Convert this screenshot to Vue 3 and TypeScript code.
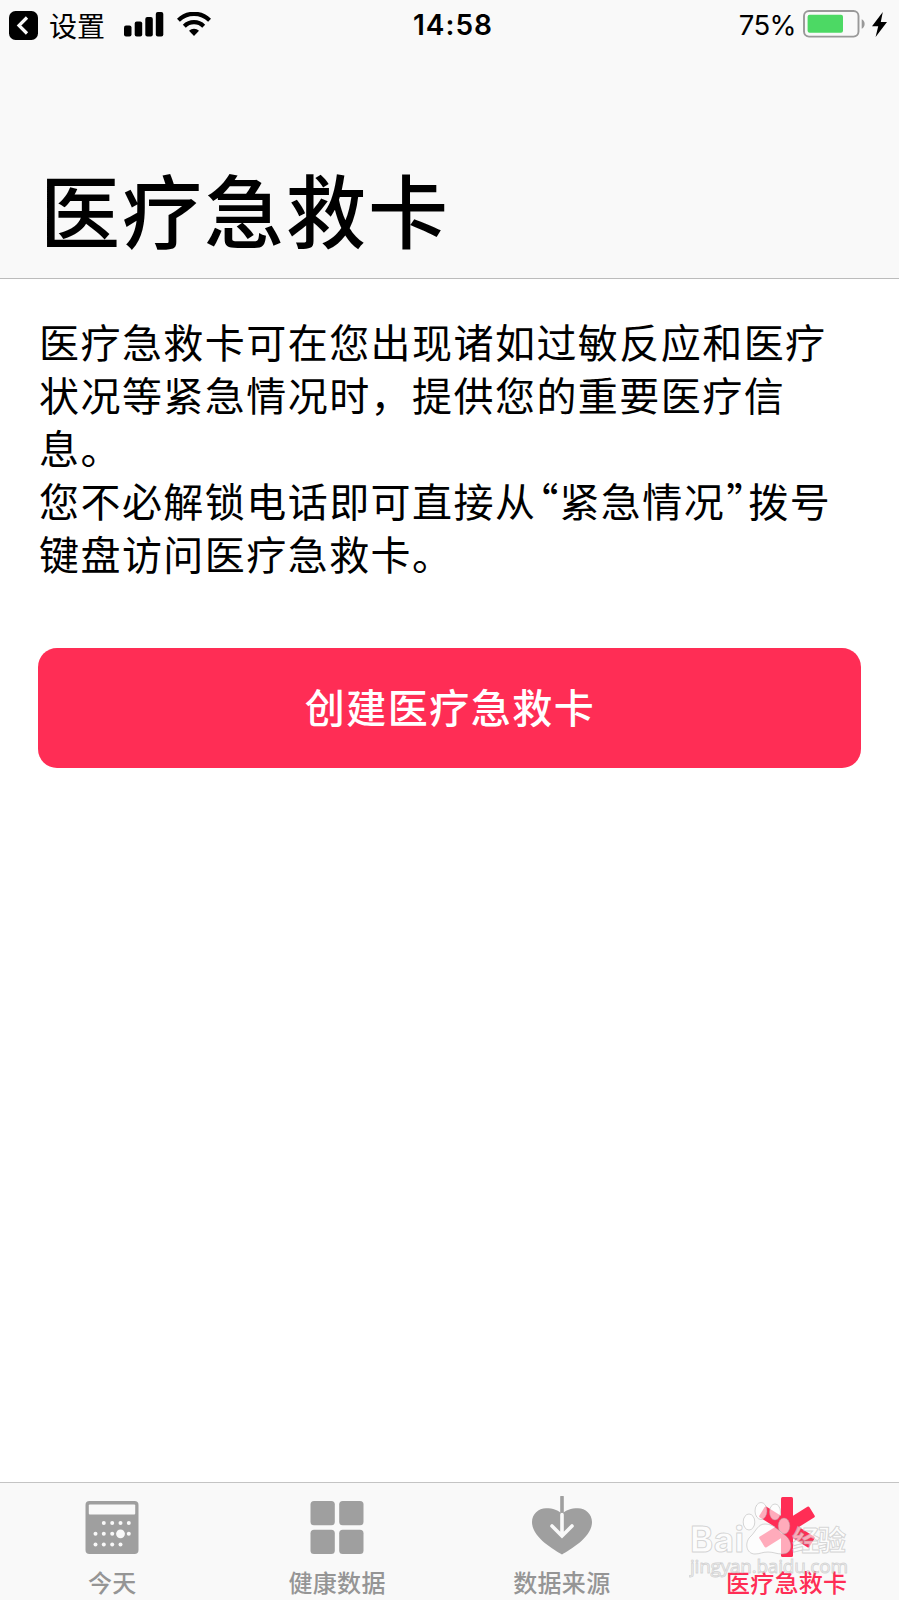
<script setup lang="ts">
interface Tab {
  id: 'today' | 'data' | 'sources' | 'medical'
  label: string
}

const tabs: Tab[] = [
  { id: 'today', label: '今天' },
  { id: 'data', label: '健康数据' },
  { id: 'sources', label: '数据来源' },
  { id: 'medical', label: '医疗急救卡' },
]
const activeTab: Tab['id'] = 'medical'

// Day dots of the calendar icon, one row per entry
const calendarDots: { y: number; xs: number[] }[] = [
  { y: 22, xs: [18.3, 26.7, 35, 43.3] },
  { y: 32.8, xs: [10, 18.3, 26.7, 43.3] },
  { y: 43.5, xs: [10, 18.3, 26.7, 35] },
]
</script>

<template>
  <div class="screen">
    <header class="header">
      <div class="status">
        <div class="side">
          <svg class="back" width="29" height="29" viewBox="0 0 29 29">
            <rect width="29" height="29" rx="6.5" />
            <path d="M18 6.5 10 14.5l8 8" fill="none" stroke="#f9f9f9" stroke-width="3.2" />
          </svg>
          <span class="app-name">设置</span>
          <svg class="signal" width="40" height="25" viewBox="0 0 40 25">
            <rect x="0" y="13.5" width="7.5" height="11" rx="2" />
            <rect x="10.7" y="9.5" width="7.5" height="15" rx="2" />
            <rect x="21.3" y="5" width="7.5" height="19.5" rx="2" />
            <rect x="31.8" y="0" width="7.5" height="24.5" rx="2" />
          </svg>
          <svg class="wifi" width="34" height="24" viewBox="0 0 34 24">
            <path d="M1.4 8.2a22.2 22.2 0 0 1 31.2 0" fill="none" stroke="#000" stroke-width="4.2" />
            <path d="M7.3 14.2a13.8 13.8 0 0 1 19.4 0" fill="none" stroke="#000" stroke-width="4.2" />
            <path d="M17 24l-5-5.3a7.2 7.2 0 0 1 10 0z" />
          </svg>
        </div>
        <span class="time">14:58</span>
        <div class="side right">
          <span class="percent">75%</span>
          <svg class="battery" width="63" height="28" viewBox="0 0 63 28">
            <rect x="1" y="1" width="54.5" height="25.6" rx="5" fill="none" stroke="#999" stroke-width="1.9" />
            <rect x="4.6" y="4.8" width="35.4" height="18" rx="2" fill="#4cd964" />
            <path d="M58.7 9.2a5.4 5.4 0 0 1 0 9.6z" fill="#999" />
          </svg>
          <svg class="bolt" width="15" height="25" viewBox="0 0 15 25">
            <path d="M10.8 0 0 14.2h6.2L3.6 25 15 10H8.8z" />
          </svg>
        </div>
      </div>
      <h1 class="title">医疗急救卡</h1>
    </header>

    <main class="content">
      <p class="text">医疗急救卡可在您出现诸如过敏反应和医疗<br>状况等紧急情况时，提供您的重要医疗信<br>息。</p>
      <p class="text">您不必解锁电话即可直接从<span class="quote">“</span>紧急情况<span class="quote">”</span>拨号<br>键盘访问医疗急救卡。</p>
      <button class="create" type="button">创建医疗急救卡</button>
    </main>

    <nav class="tabs">
      <a v-for="tab in tabs" :key="tab.id" class="tab" :class="{ active: tab.id === activeTab }">
        <svg v-if="tab.id === 'today'" class="icon" width="62" height="62" viewBox="-4.5 -5 62 62">
          <rect width="53" height="53" rx="4" fill="currentColor" />
          <rect x="3.3" y="3.5" width="46.4" height="10" rx="1" fill="#f9f9f9" />
          <g fill="#f9f9f9">
            <template v-for="row in calendarDots" :key="row.y">
              <circle v-for="x in row.xs" :key="x" :cx="x" :cy="row.y" r="2" />
            </template>
            <circle cx="35" cy="32.8" r="4.4" />
          </g>
        </svg>
        <svg v-else-if="tab.id === 'data'" class="icon" width="62" height="62" viewBox="-4.5 -5 62 62" fill="currentColor">
          <rect width="24.3" height="24.3" rx="3.5" />
          <rect x="28.7" width="24.3" height="24.3" rx="3.5" />
          <rect y="28.7" width="24.3" height="24.3" rx="3.5" />
          <rect x="28.7" y="28.7" width="24.3" height="24.3" rx="3.5" />
        </svg>
        <svg v-else-if="tab.id === 'sources'" class="icon" width="62" height="62" viewBox="0 0 62 62">
          <path d="M31 58.500C23 53.500 1 41.500 1 26 1 18 7.500 12.200 15 12.200c7 0 12.500 2 16 5.800 3.500-3.800 9-5.800 16-5.800 7.500 0 14 5.800 14 13.800C61 41.500 39 53.500 31 58.500z" fill="currentColor" />
          <path d="M31 1v17" stroke="currentColor" stroke-width="3.600" stroke-linecap="round" />
          <path d="M31 18.500V39.500M21 30l10 10 10-10" fill="none" stroke="#f9f9f9" stroke-width="3.600" stroke-linecap="round" />
        </svg>
        <svg v-else class="icon" width="62" height="62" viewBox="0 0 62 62" fill="currentColor">
          <rect x="25" y="1" width="12" height="60" rx="1.500" />
          <rect x="24.700" y="1.500" width="12.600" height="59" rx="1.500" transform="rotate(58 31 31)" />
          <rect x="24.700" y="1.500" width="12.600" height="59" rx="1.500" transform="rotate(-58 31 31)" />
        </svg>
        <span class="label">{{ tab.label }}</span>
      </a>
      <svg class="watermark" width="170" height="84" viewBox="0 0 170 84">
        <g class="mark">
          <text class="brand" x="1" y="53" textLength="54">Bai</text>
          <ellipse cx="60" cy="23" rx="5.800" ry="8" />
          <ellipse cx="72" cy="12" rx="6" ry="8.500" />
          <ellipse cx="86" cy="13" rx="5.500" ry="8" />
          <ellipse cx="95" cy="27" rx="5.800" ry="8" />
          <path d="M76 25c-7 0-9 7-14 12-7 6-5 18 4 18 5 0 7-2 13-2s8 2 14 2c11 0 11-12 4-18-7-5-12-12-21-12z" />
          <text class="cn" x="103" y="52" textLength="54">经验</text>
          <text class="url" x="1" y="74" textLength="158">jingyan.baidu.com</text>
        </g>
      </svg>
    </nav>
  </div>
</template>

<style>
body {
  margin: 0;
}
</style>

<style scoped>
.screen {
  width: 899px;
  height: 1600px;
  display: flex;
  flex-direction: column;
  overflow: hidden;
  background: #fff;
  color: #000;
  font-family: "Noto Sans CJK SC", sans-serif;
}
.header {
  box-sizing: border-box;
  height: 279px;
  background: #f9f9f9;
  border-bottom: 1px solid #bcbcbc;
}
.status {
  height: 50px;
  display: grid;
  grid-template-columns: 1fr auto 1fr;
  align-items: center;
  padding: 0 12px 0 9px;
}
.side {
  display: flex;
  align-items: center;
}
.right {
  justify-content: flex-end;
}
.app-name {
  margin-left: 11px;
  font-size: 28px;
  line-height: 48px;
}
.signal {
  margin-left: 19px;
  margin-top: -2px;
}
.wifi {
  margin-left: 13px;
  margin-top: -2px;
}
.time {
  font: 600 28px/50px Inter, sans-serif;
  letter-spacing: 1px;
  padding-left: 10px;
}
.percent {
  font: 400 27.5px/50px Inter, sans-serif;
  letter-spacing: -0.6px;
}
.battery {
  margin-left: 7px;
  margin-top: -2px;
}
.bolt {
  margin-left: 6px;
  margin-top: -2px;
}
.title {
  margin: 97px 0 0 40px;
  font-size: 80px;
  font-weight: 500;
  line-height: 120px;
  letter-spacing: 2px;
}
.content {
  flex: 1;
  padding: 36px 38px 0;
}
.text {
  margin: 0 0 0 1px;
  font-size: 40px;
  line-height: 52.9px;
  letter-spacing: 1.45px;
  white-space: nowrap;
}
.quote {
  display: inline-block;
  width: 23px;
  font-feature-settings: "palt";
  letter-spacing: 0;
  line-height: 1;
  text-align: center;
}
.create {
  display: block;
  box-sizing: border-box;
  width: 823px;
  height: 120px;
  margin: 68.5px 0 0;
  padding: 0 0 4px 1px;
  border: 0;
  border-radius: 19px;
  background: #ff2d55;
  color: #fff;
  font-family: inherit;
  font-size: 40px;
  font-weight: 500;
  letter-spacing: 1.5px;
}
.tabs {
  position: relative;
  box-sizing: border-box;
  height: 118px;
  display: grid;
  grid-template-columns: repeat(4, 1fr);
  background: #f9f9f9;
  border-top: 1px solid #c4c4c4;
}
.tab {
  display: flex;
  flex-direction: column;
  align-items: center;
  padding-top: 13px;
  color: #9f9f9f;
}
.active {
  color: #ff2d55;
}
.icon {
  display: block;
}
.label {
  margin-top: 6px;
  font-size: 24px;
  font-weight: 500;
  line-height: 36px;
  letter-spacing: 0.3px;
}
.tab:not(.active) .label {
  color: #959595;
}
.watermark {
  position: absolute;
  left: 689px;
  top: 16px;
}
.mark {
  fill: rgba(255, 255, 255, 0.6);
  stroke: rgba(160, 160, 160, 0.42);
  stroke-width: 1;
}
.brand {
  font: 700 35px Inter, sans-serif;
}
.cn {
  font: 700 28px "Noto Sans CJK SC", sans-serif;
}
.url {
  font: 400 19px "Open Sans", sans-serif;
}
</style>
